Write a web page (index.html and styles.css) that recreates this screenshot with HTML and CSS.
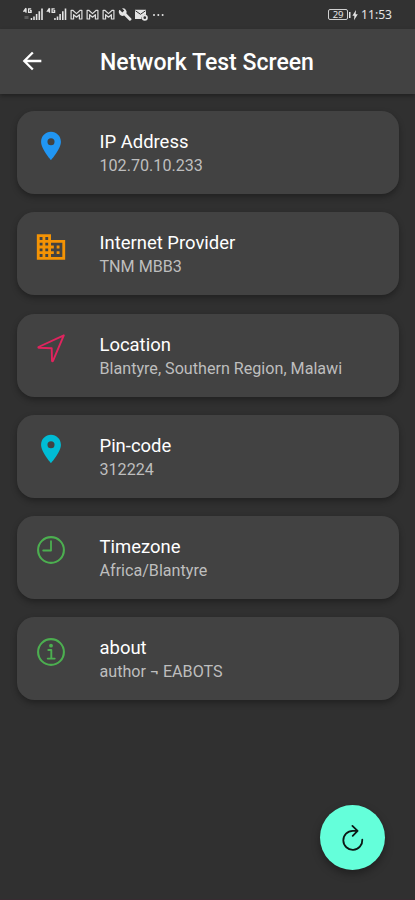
FILE: index.html
```html
<!DOCTYPE html>
<html lang="en">
<head>
<meta charset="utf-8">
<title>Network Test Screen</title>
<link rel="stylesheet" href="styles.css">
</head>
<body>
<div class="status">
  <svg class="status-icons" width="145" height="16" viewBox="0 0 145 16" fill="#e4e4e4">
    <g id="signal">
      <path d="M3 1.200 1 4h2.500M3 1.200v4.600M8.200 1.800H5.600v3.500h2.500V3.600H7" fill="none" stroke="#e4e4e4" stroke-width="1.300"/>
      <path d="M7.700 11h1.500v2H7.700zM10.200 9.500h1.600V13h-1.600zM12.800 7h1.600v6h-1.600zM15.500 4.200h1.600V13h-1.600zM18.200 1.500h1.600V13h-1.600z"/>
    </g>
    <path d="M1.500 9h4v3h-4z" fill="#5a5a5a"/>
    <use href="#signal" x="23.500"/>
    <g fill="none" stroke="#dedede" stroke-width="1.200" stroke-linejoin="round">
      <path id="mail" d="M48.100 12V3.300h1.700l3.700 3.300 3.700-3.300h1.700V12h-2.500V7.700l-2.900 2.500-2.900-2.500V12z"/>
      <use href="#mail" x="16"/>
      <use href="#mail" x="32"/>
    </g>
    <path d="M96.200 2.500 98.600 5l2-1.900-2.200-2.200a3.900 3.900 0 0 1 4.300 5.200l4.900 4.900q.6 1-.3 1.800t-1.800.2l-5-5a3.900 3.900 0 0 1-5-5.500z" transform="translate(.7 .5)"/>
    <path d="M112 2.800h11v5.200a3.500 3.500 0 0 0-4.500 4h-6.500z"/>
    <path d="m112.500 3.800 5 3.500 5-3.500" fill="none" stroke="#333"/>
    <circle cx="121.800" cy="10.700" r="2.200" fill="none" stroke="#e4e4e4" stroke-width="1.700"/>
    <circle cx="131" cy="8" r="1"/><circle cx="135.300" cy="8" r="1"/><circle cx="139.600" cy="8" r="1"/>
  </svg>
  <div class="power">
    <span class="battery">29</span>
    <svg width="10" height="12" viewBox="0 0 10 12" fill="#e4e4e4"><path d="M0 3h1.500v6H0zM7 1 3.400 6.700h2L5 11.200l3.800-5.900H6.600z"/></svg>
    <span class="time">11:53</span>
  </div>
</div>
<header class="appbar">
  <svg class="back" width="28" height="28" viewBox="0 0 24 24" fill="#fff"><path d="M20 11H7.830l5.590-5.590L12 4l-8 8 8 8 1.410-1.410L7.830 13H20z"/></svg>
  <h1>Network Test Screen</h1>
</header>
<main class="list">
  <section class="card">
    <svg class="icon" viewBox="0 0 24 24" fill="#2196f3"><path d="M12 2C8.130 2 5 5.130 5 9c0 5.250 7 13 7 13s7-7.750 7-13c0-3.870-3.130-7-7-7zm0 9.500a2.500 2.500 0 0 1 0-5 2.500 2.500 0 0 1 0 5z"/></svg>
    <div><h2>IP Address</h2><p>102.70.10.233</p></div>
  </section>
  <section class="card">
    <svg class="icon" viewBox="0 0 24 24" fill="#ff9800" fill-opacity=".94"><path d="M12 7V3H2v18h20V7H12zM6 19H4v-2h2v2zm0-4H4v-2h2v2zm0-4H4V9h2v2zm0-4H4V5h2v2zm4 12H8v-2h2v2zm0-4H8v-2h2v2zm0-4H8V9h2v2zm0-4H8V5h2v2zm10 12h-8v-2h2v-2h-2v-2h2v-2h-2V9h8v10zm-2-8h-2v2h2v-2zm0 4h-2v2h2v-2z"/></svg>
    <div><h2>Internet Provider</h2><p>TNM MBB3</p></div>
  </section>
  <section class="card">
    <svg class="icon" viewBox="0 0 34 34" fill="none" stroke="#e0245e" stroke-width="1.900" stroke-linejoin="round"><path d="M29.800 4.300 4.500 16q-.4.700.4.800l12.800.4.300 12.600q.4.900 1 .1z"/></svg>
    <div><h2>Location</h2><p>Blantyre, Southern Region, Malawi</p></div>
  </section>
  <section class="card">
    <svg class="icon" viewBox="0 0 24 24" fill="#00bcd4"><path d="M12 2C8.130 2 5 5.130 5 9c0 5.250 7 13 7 13s7-7.750 7-13c0-3.870-3.130-7-7-7zm0 9.500a2.500 2.500 0 0 1 0-5 2.500 2.500 0 0 1 0 5z"/></svg>
    <div><h2>Pin-code</h2><p>312224</p></div>
  </section>
  <section class="card">
    <svg class="icon" viewBox="0 0 34 34" fill="none" stroke="#4caf50" stroke-width="2.100"><circle cx="17" cy="17" r="12.900"/><path d="M17 8.200v9.300H9.200" stroke-width="1.800" stroke-linecap="round" stroke-linejoin="round"/></svg>
    <div><h2>Timezone</h2><p>Africa/Blantyre</p></div>
  </section>
  <section class="card">
    <svg class="icon" viewBox="0 0 34 34" fill="none" stroke="#4caf50" stroke-width="2.100"><circle cx="17" cy="17" r="12.900"/><path d="M14.300 15h3v8.500M13.700 23.600h7" stroke-width="1.900" stroke-linecap="round" stroke-linejoin="round"/><circle cx="17" cy="10.700" r="1.900" fill="#4caf50" stroke="none"/></svg>
    <div><h2>about</h2><p>author ¬ EABOTS</p></div>
  </section>
</main>
<button class="fab" aria-label="Refresh">
  <svg width="28" height="28" viewBox="0 0 28 28" fill="none" stroke="#0c1815" stroke-width="1.800" stroke-linecap="round" stroke-linejoin="round"><path d="M23.300 15.700A9.500 9.500 0 1 1 13.800 6.800h4.700M13.400 1.900l5.200 4.900-4.900 5"/></svg>
</button>
</body>
</html>
```
FILE: styles.css
```css
* {
  box-sizing: border-box;
}

body {
  margin: 0;
  height: 900px;
  overflow: hidden;
  background: #303030;
  border-bottom: 1px solid #382b31;
  color: #fff;
  font-family: Roboto, sans-serif;
}

h1, h2, p {
  margin: 0;
}

.status {
  height: 29px;
  padding: 0 23px;
  display: flex;
  align-items: center;
  justify-content: space-between;
  background: #323232;
}

.power {
  display: flex;
  align-items: center;
  color: #e4e4e4;
}

.battery {
  width: 20px;
  height: 11px;
  border: 1px solid #d0d0d0;
  border-radius: 2px;
  font: 9.5px/9px "Noto Sans", sans-serif;
  text-align: center;
}

.battery + svg {
  margin-left: 1px;
}

.time {
  margin-left: 2px;
  font: 12.1px/16px "Noto Sans", sans-serif;
}

.appbar {
  position: relative;
  height: 64.5px;
  padding-left: 18px;
  display: flex;
  align-items: center;
  background: #424242;
  box-shadow: 0 2px 4px rgba(0, 0, 0, .32);
}

.appbar h1 {
  margin-left: 54px;
  padding-top: 3px;
  font-size: 23.06px;
  font-weight: 500;
  line-height: 28px;
}

.list {
  padding: 17.7px 16.5px 0;
  display: grid;
  gap: 18.2px;
}

.card {
  height: 83px;
  padding: 17.5px 17px 0;
  display: flex;
  gap: 32px;
  border-radius: 17.5px;
  background: #424242;
  box-shadow: 0 3px 6px rgba(0, 0, 0, .32);
}

.icon {
  width: 34px;
  height: 34px;
  flex: none;
}

.card h2 {
  padding-top: 1.5px;
  font-size: 18.45px;
  font-weight: 400;
  line-height: 24px;
}

.card p {
  padding-top: 1px;
  color: #bebebe;
  font-size: 16.14px;
  line-height: 22px;
}

.fab {
  position: absolute;
  left: 320px;
  top: 805px;
  width: 65px;
  height: 65px;
  padding: 0;
  display: grid;
  place-items: center;
  border: 0;
  border-radius: 50%;
  background: #64ffda;
  box-shadow: 0 4px 9px rgba(0, 0, 0, .35);
}
```
